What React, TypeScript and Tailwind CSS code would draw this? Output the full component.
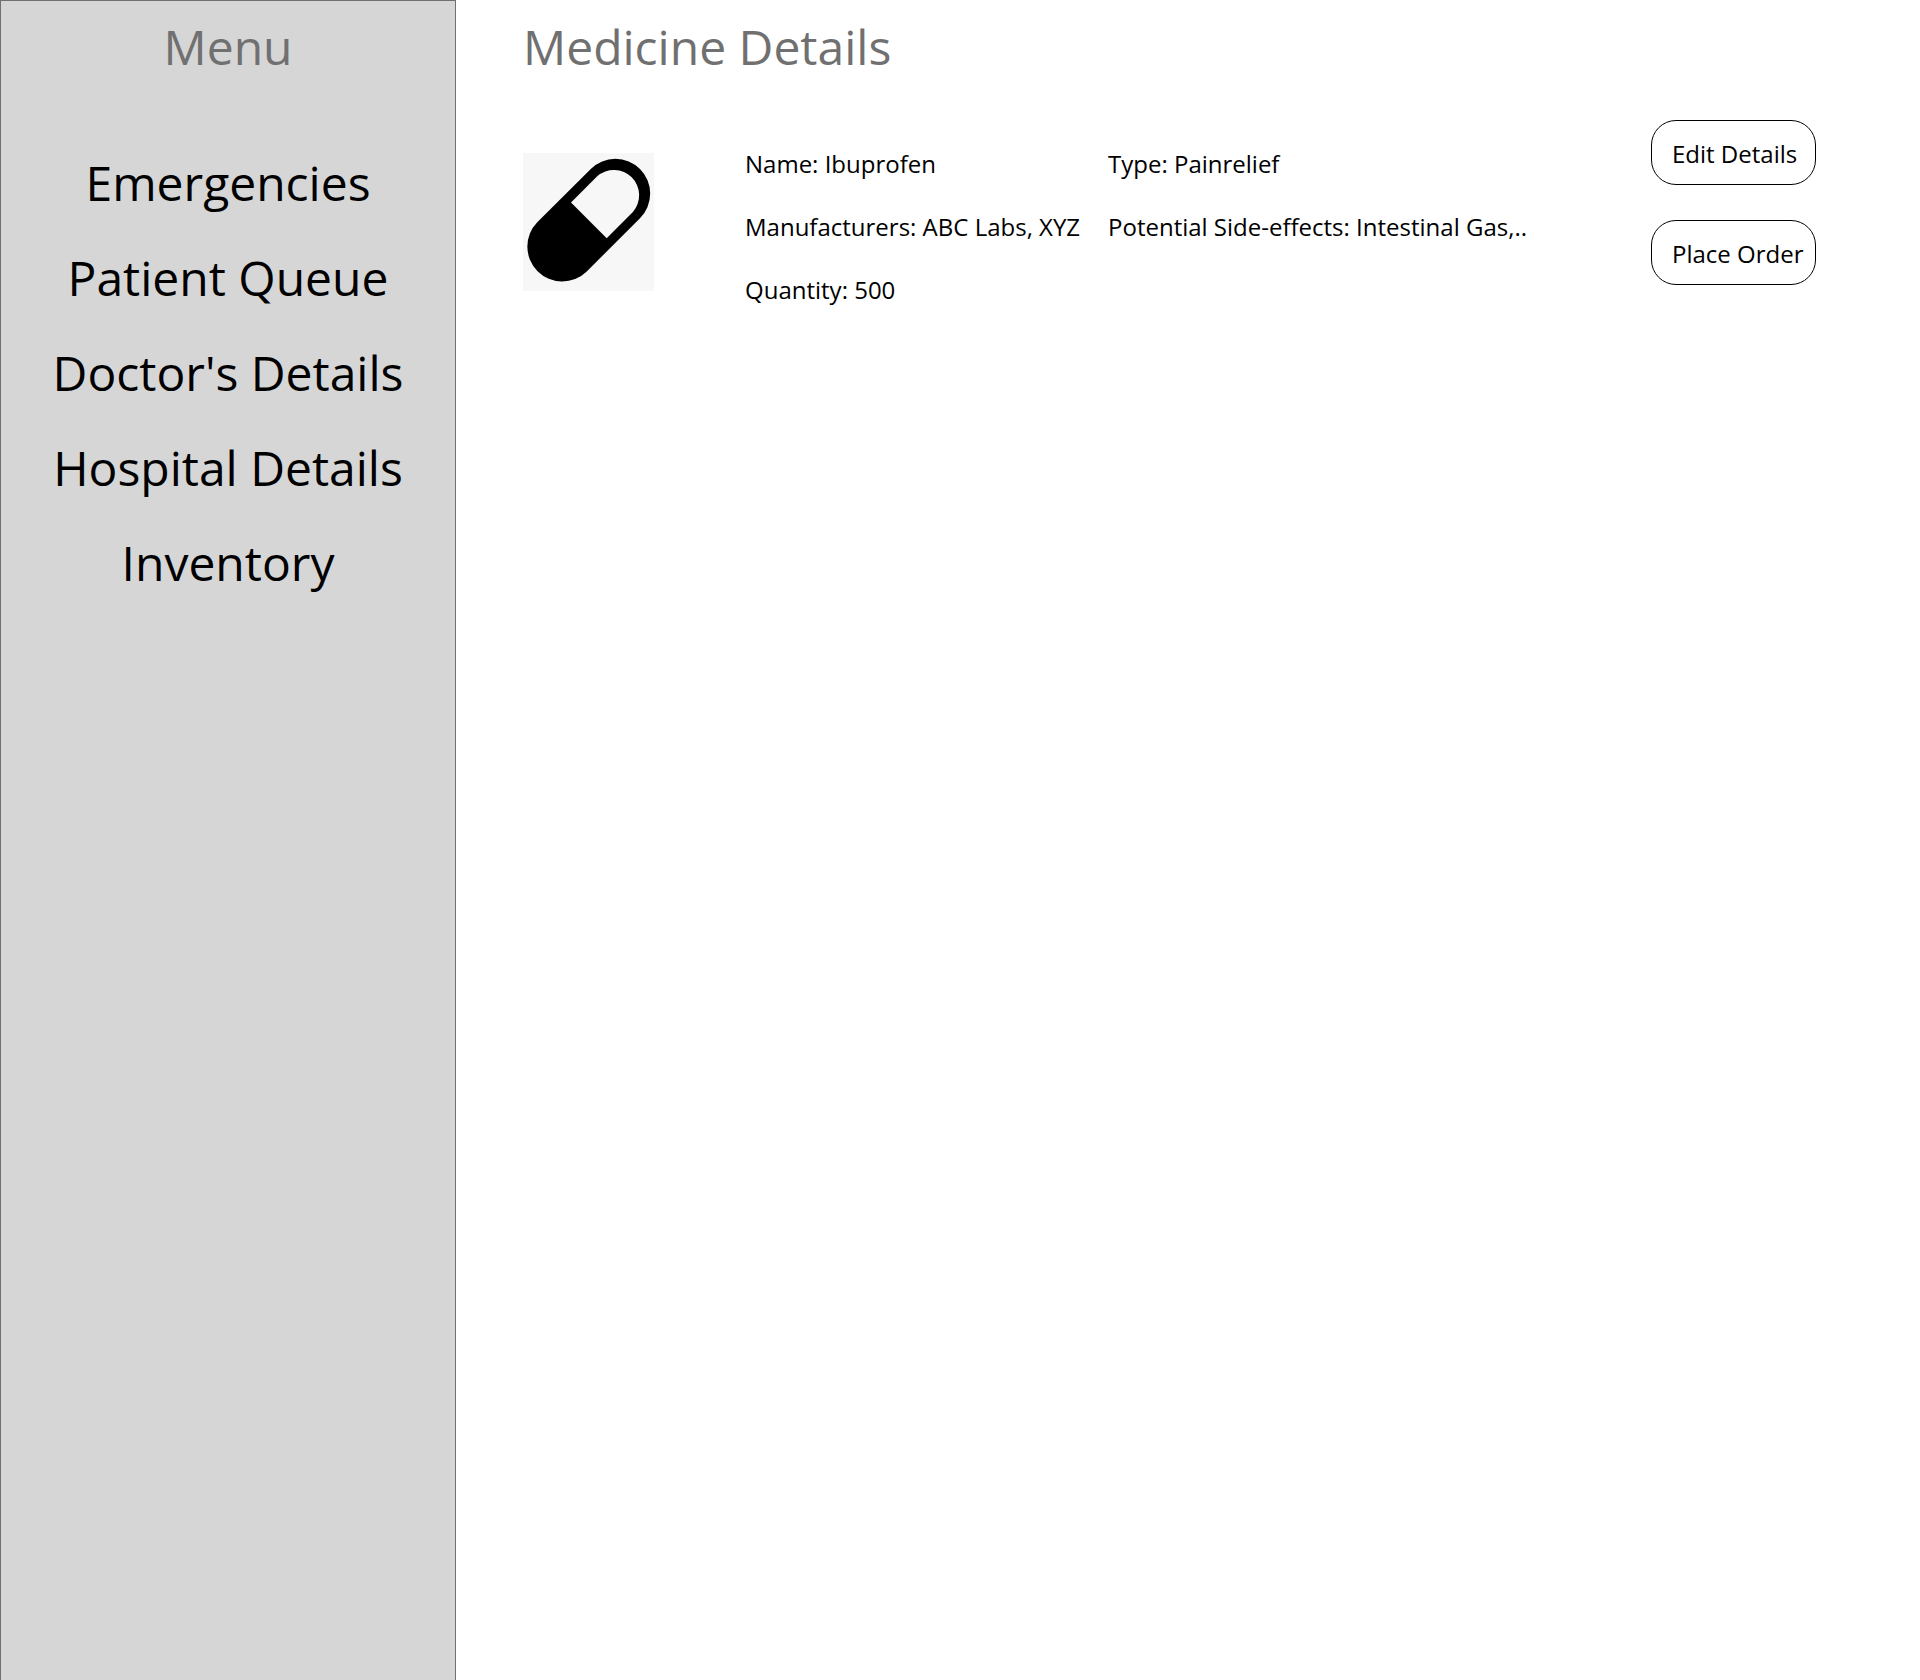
const menuItems = [
  'Emergencies',
  'Patient Queue',
  "Doctor's Details",
  'Hospital Details',
  'Inventory',
];

function PillIcon() {
  return (
    <svg viewBox="0 0 131 138" className="mt-[33px] h-[138px] w-[131px] shrink-0 bg-[#f7f7f7]" role="img" aria-label="Pill">
      <path d="M14.25 69.25L67.8 16A34.7 34.7 0 0 1 117 65.2L63.5 118.7A34.9 34.9 0 0 1 14.25 69.25Z" fill="#000" />
      <path d="M48 49.4L74.2 23.2A25.3 25.3 0 0 1 109.9 58.9L83.7 85.2Z" fill="#f7f7f7" />
    </svg>
  );
}

function ActionButton({ label }: { label: string }) {
  return (
    <button type="button" className="h-[65px] w-full rounded-[25px] border border-black bg-white pt-0.5 pl-5 text-left text-2xl whitespace-nowrap">
      {label}
    </button>
  );
}

export default function App() {
  return (
    <div className="flex min-h-screen bg-white font-['Segoe_UI','Open_Sans',sans-serif] text-black">
      <aside className="w-[456px] shrink-0 border border-b-0 border-[#707070] bg-[#d6d6d6] pt-[14px] text-center text-5xl">
        <h2 className="leading-16 text-[#707070]">Menu</h2>
        <nav className="mt-18">
          <ul className="flex flex-col gap-[31px] leading-16">
            {menuItems.map((item) => (
              <li key={item}>
                <a href="#">{item}</a>
              </li>
            ))}
          </ul>
        </nav>
      </aside>

      <main className="min-w-0 flex-1 pt-[15px] pr-[104px] pl-[67px]">
        <h1 className="text-5xl leading-16 text-[#707070]">Medicine Details</h1>
        <section className="mt-[41px] flex items-start">
          <PillIcon />
          <div className="mt-7 ml-[91px] grid min-w-0 grid-cols-[363px_auto] gap-y-[31px] text-2xl whitespace-nowrap">
            <p>Name: Ibuprofen</p>
            <p>Type: Painrelief</p>
            <p>Manufacturers: ABC Labs, XYZ</p>
            <p>Potential Side-effects: Intestinal Gas,..</p>
            <p>Quantity: 500</p>
          </div>
          <div className="ml-auto flex w-[165px] shrink-0 flex-col gap-[35px]">
            <ActionButton label="Edit Details" />
            <ActionButton label="Place Order" />
          </div>
        </section>
      </main>
    </div>
  );
}
